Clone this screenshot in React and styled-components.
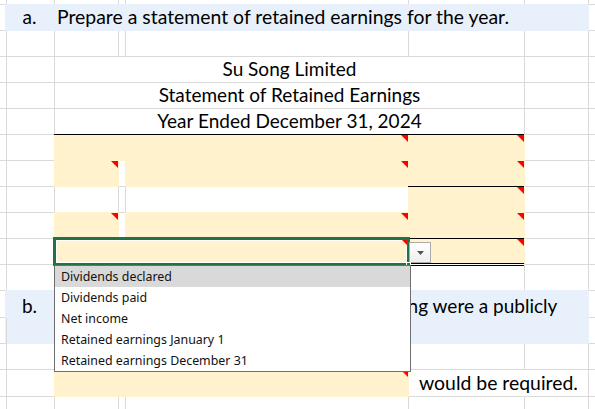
import React from 'react'
import styled, { createGlobalStyle, css } from 'styled-components'

const GRID = '#dadada'
const CREAM = '#fff2cc'
const BLUE = '#e8f1fb'
const GREEN = '#217346'

const Global = createGlobalStyle`
  *, *::before, *::after { box-sizing: border-box; }
  html, body { margin: 0; padding: 0; background: #fff; }
  body { overflow: hidden; font-family: Lato, "Liberation Sans", sans-serif; }
`

const Sheet = styled.div`
    display: grid;
    grid-template-columns: 6px 49px 64px 7px 283px 116px 64px 1fr;
    grid-template-rows: 5px repeat(11, 26px) 27px 26px 26px 27px 26px;
    width: 595px;
    height: 409px;
    overflow: hidden;
    font-family: Lato, "Liberation Sans", sans-serif;
    font-size: 19px;
    color: #000;
`;

const Cell = styled.div`
    position: relative;
    grid-column: span ${props => props.$span || 1};
    grid-row: span ${props => props.$rows || 1};
    display: flex;
    align-items: ${props => props.$top ? 'flex-start' : 'flex-end'};
    justify-content: ${props => props.$center ? 'center' : 'flex-start'};
    padding: ${props => props.$top ? '5px 3px 0' : '0 3px 2px'};
    padding-left: ${props => props.$indent || 3}px;
    font-size: ${props => props.$size || 19}px;
    line-height: 22px;
    white-space: nowrap;
    border-right: 1px solid ${props => props.$fill || (props.$spill ? 'transparent' : GRID)};
    border-bottom: 1px solid ${props => props.$fill || GRID};
    ${props => props.$fill && css`
        background: ${props.$fill};
        margin: -1px 0 0 -1px;
    `}
    ${props => props.$line && css`
        box-shadow: inset 0 1px 0 #000;
    `}
    ${props => props.$double && css`
        border-bottom: 3px double #000;
        margin-bottom: -1px;
        background-clip: padding-box;
    `}
`;

const Flag = styled.span`
    position: absolute;
    top: ${props => props.$small ? 2 : 1}px;
    right: ${props => props.$small ? 2 : 0}px;
    width: 0;
    height: 0;
    border-top: ${props => props.$small ? 5 : 7}px solid #ff0000;
    border-left: ${props => props.$small ? 5 : 7}px solid transparent;
`;

const Selected = styled.div`
    position: relative;
    z-index: 2;
    grid-column: span 3;
    margin: -1px 0 0 -1px;
    background: ${CREAM};
    box-shadow: 0 0 0 1px ${GREEN}, inset 0 0 0 2px ${GREEN}, inset 0 0 0 3px #fff;
`;

const Handle = styled.span`
    position: absolute;
    right: -2px;
    bottom: -2px;
    width: 5px;
    height: 5px;
    background: ${GREEN};
    border: 1px solid #fff;
`;

const DropButton = styled.div`
    position: absolute;
    left: 100%;
    top: 4px;
    width: 22px;
    height: 21px;
    display: flex;
    align-items: center;
    justify-content: center;
    border: 1px solid #ababab;
    background: linear-gradient(#ffffff, #eeeeee);
`;

const List = styled.ul`
    position: absolute;
    left: 0;
    top: 100%;
    width: calc(100% + 2px);
    margin: 0;
    padding: 0;
    list-style: none;
    background: #fff;
    border: 1px solid #6e6e6e;
    font-family: "Noto Sans", "Open Sans", sans-serif;
    font-size: 12.4px;
    color: #111;
`;

const Option = styled.li`
    height: 21px;
    line-height: 21px;
    padding-left: 6px;
    background: ${props => props.$active ? '#d9d9d9' : 'transparent'};
`;

const options = [
    'Dividends declared',
    'Dividends paid',
    'Net income',
    'Retained earnings January 1',
    'Retained earnings December 31',
];

const plain = n => Array.from({length: n}, () => ({}));

const rows = [
    plain(8),
    [{}, {fill: BLUE, center: true, text: 'a.'}, {fill: BLUE, span: 5, size: 19.4, text: 'Prepare a statement of retained earnings for the year.'}, {}],
    plain(8),
    [{}, {}, {span: 4, center: true, text: 'Su Song Limited'}, {}, {}],
    [{}, {}, {span: 4, center: true, text: 'Statement of Retained Earnings'}, {}, {}],
    [{}, {}, {span: 4, center: true, text: 'Year Ended December 31, 2024'}, {}, {}],
    [{}, {}, {fill: CREAM, span: 3, tri: true, line: true}, {fill: CREAM, tri: true, line: true}, {}, {}],
    [{}, {}, {fill: CREAM, tri: true}, {}, {fill: CREAM, tri: true}, {fill: CREAM, tri: true}, {}, {}],
    [{}, {}, {}, {}, {}, {fill: CREAM, tri: true, line: true}, {}, {}],
    [{}, {}, {fill: CREAM, tri: true}, {}, {fill: CREAM, tri: true}, {fill: CREAM, tri: true}, {}, {}],
    [{}, {}, {select: true}, {fill: CREAM, tri: true, line: true, double: true}, {}, {}],
    plain(8),
    [{}, {fill: BLUE, rows: 2, top: true, center: true, text: 'b.'}, {fill: BLUE, span: 5, rows: 2, top: true, size: 19, text: <>What statement would be needed if Su Song were a publicly<br />traded company?</>}, {}],
    plain(2),
    plain(8),
    [{}, {}, {fill: CREAM, span: 3, tri: true}, {spill: true, indent: 10, size: 19.4, text: 'would be required.'}, {}, {}],
    plain(8),
];

const App = () => {
    return (
        <>
            <Global />
            <Sheet>
                {rows.map((row, r) => row.map((c, i) => c.select ? (
                    <Selected key={`${r}-${i}`}>
                        <Flag $small />
                        <DropButton>
                            <svg width="7" height="4" viewBox="0 0 7 4"><polygon points="0,0 7,0 3.5,4" fill="#555" /></svg>
                        </DropButton>
                        <Handle />
                        <List>
                            {options.map((o, k) => <Option key={o} $active={k === 0}>{o}</Option>)}
                        </List>
                    </Selected>
                ) : (
                    <Cell
                        key={`${r}-${i}`}
                        $span={c.span}
                        $rows={c.rows}
                        $fill={c.fill}
                        $center={c.center}
                        $top={c.top}
                        $line={c.line}
                        $double={c.double}
                        $spill={c.spill}
                        $indent={c.indent}
                        $size={c.size}
                    >
                        {c.tri && <Flag />}
                        {c.text && <span>{c.text}</span>}
                    </Cell>
                )))}
            </Sheet>
        </>
    )
}

export default App;
